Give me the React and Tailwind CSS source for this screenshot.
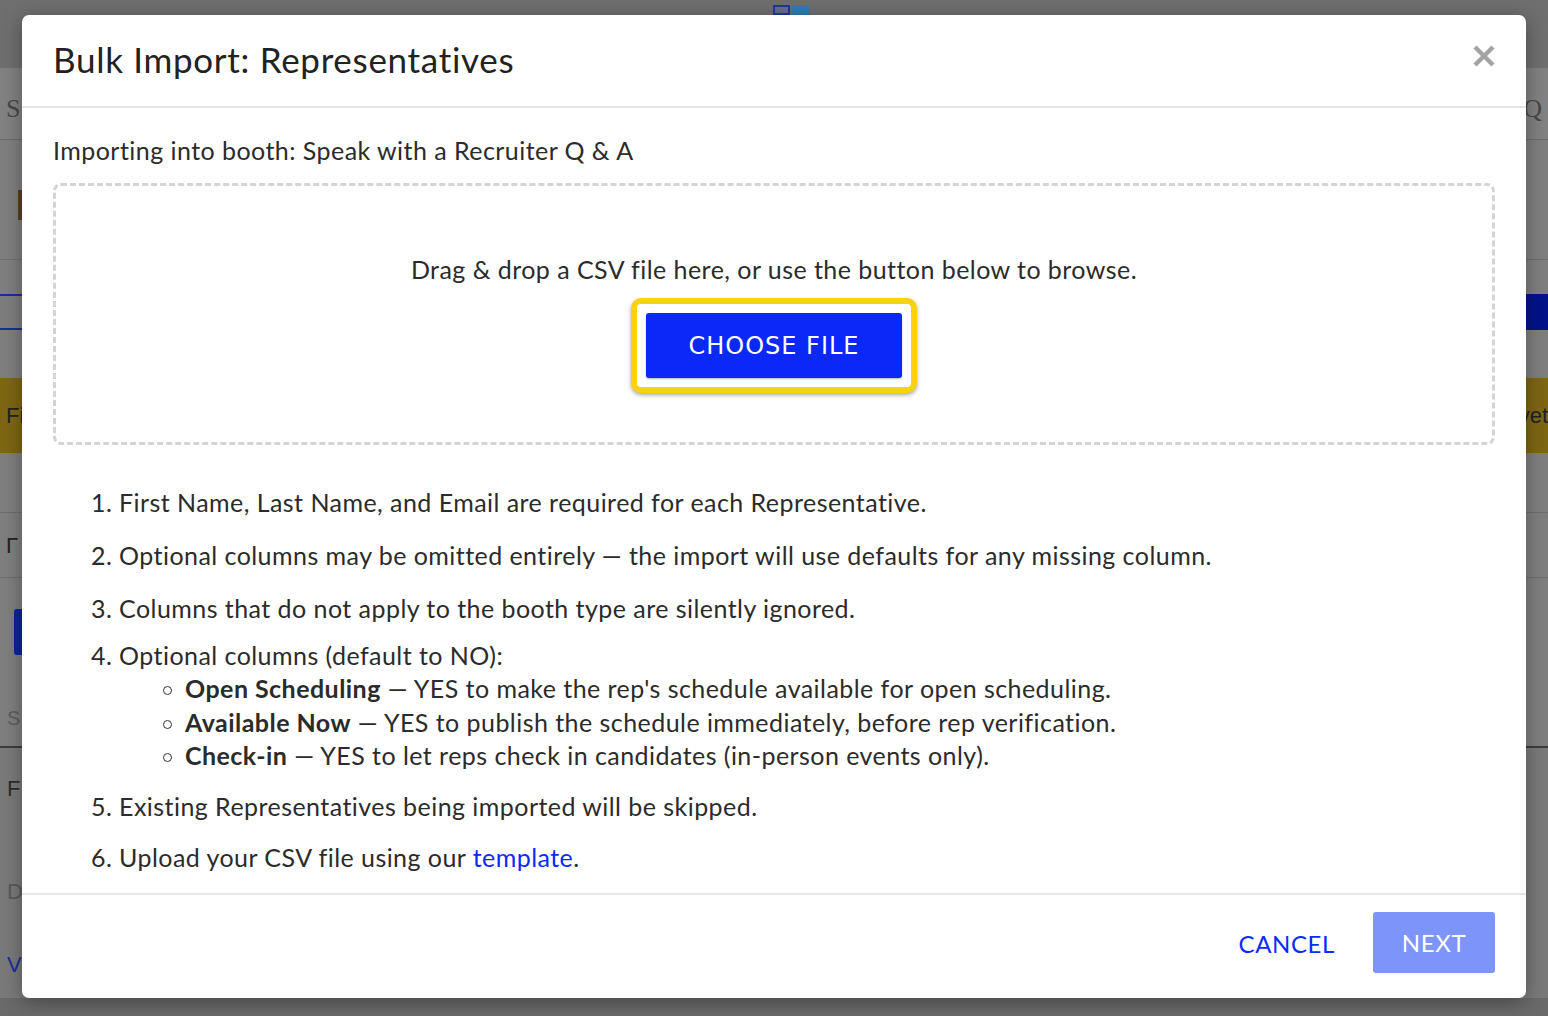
import React from "react";

function CloseIcon() {
  return (
    <svg width="24" height="24" viewBox="0 0 24 24" className="block">
      <path d="M3 3 L21 21 M21 3 L3 21" stroke="#a3a3a3" strokeWidth="4.4" strokeLinecap="butt" />
    </svg>
  );
}

function Background() {
  return (
    <div className="flex flex-col w-full h-[1016px] bg-[#7a7a7a] font-['Liberation_Sans',sans-serif]">
      <div className="h-[68px] bg-[#6f6f6f] flex justify-center">
        <div className="flex gap-[2px] mt-[5px] h-[10px] ml-[34px]">
          <div className="w-[17px] h-[10px] bg-[#6a6f86] border-2 border-[#1d3a9a]" />
          <div className="w-[17px] h-[10px] bg-[#2f7cb5]" />
        </div>
      </div>
      <div className="h-[72px] bg-[#828282] border-b border-[#6c6c6c] flex items-center justify-between px-[6px] text-[#474747] text-[26px] font-['Liberation_Serif',serif]">
        <span className="mt-[10px]">S</span>
        <span className="mt-[10px]">Q</span>
      </div>
      <div className="h-[120px] bg-[#7f7f7f] border-b border-[#6f6f6f] flex items-center px-[18px]">
        <div className="w-[6px] h-[30px] bg-[#5a4020] mt-[10px]" />
      </div>
      <div className="h-[34px] bg-[#7f7f7f]" />
      <div className="h-[36px] flex justify-between">
        <div className="w-[22px] border-y-2 border-[#1c2c9c] bg-[#7e7e7e]" />
        <div className="w-[22px] bg-[#03138a]" />
      </div>
      <div className="h-[48px] bg-[#7f7f7f]" />
      <div className="h-[75px] bg-[#7e6613] flex items-center justify-between text-[22px] text-[#222]">
        <span className="pl-[6px]">Fi</span>
        <span>vet</span>
      </div>
      <div className="h-[60px] bg-[#7f7f7f] border-b border-[#6f6f6f]" />
      <div className="h-[65px] bg-[#7f7f7f] border-b border-[#6f6f6f] flex items-center px-[6px] text-[22px] text-[#222]">
        <span>Γ</span>
      </div>
      <div className="h-[31px] bg-[#7f7f7f]" />
      <div className="h-[46px] bg-[#7f7f7f] flex pl-[14px]">
        <div className="w-[10px] h-full bg-[#0d239e] rounded-l-[3px]" />
      </div>
      <div className="h-[93px] bg-[#7f7f7f] border-b-2 border-[#3d3d3d] flex items-center px-[7px] text-[20px] text-[#5e5e5e]">
        <span className="mt-[34px]">S</span>
      </div>
      <div className="h-[250px] bg-[#7a7a7a] flex flex-col px-[7px] text-[22px] text-[#2d2d2d]">
        <span className="mt-[24px]">F</span>
        <span className="mt-[70px] text-[#5a5a5a]">D</span>
        <span className="mt-[40px] text-[#1a2c9a]">V</span>
      </div>
      <div className="flex-1 bg-[#6a6a6a]" />
    </div>
  );
}

function Bullet() {
  return <span className="inline-block w-[9px] h-[9px] rounded-full border-[1.5px] border-[#333] mr-[13px] mb-[3px]" />;
}

function Item({ n, children, className = "" }) {
  return (
    <li className={"flex " + className}>
      <span className="w-[28px] shrink-0">{n}.</span>
      <div className="flex-1">{children}</div>
    </li>
  );
}

export default function App() {
  return (
    <div className="relative w-full h-[1016px] overflow-hidden">
      <Background />
      <div className="absolute left-[22px] top-[15px] w-[1504px] h-[983px] bg-white rounded-[7px] shadow-[0_4px_20px_rgba(0,0,0,0.35)] flex flex-col font-['Lato',sans-serif] text-[#2b2b2b] tracking-[0.45px]">
        <div className="h-[93px] shrink-0 border-b-2 border-[#e6e6e6] flex items-center justify-between pl-[31px] pr-[30px]">
          <h1 className="text-[35px] leading-none text-[#222] tracking-[0.7px] mt-[-2px]">Bulk Import: Representatives</h1>
          <button className="mt-[-10px]"><CloseIcon /></button>
        </div>
        <div className="flex-1 px-[31px] pt-[25px] text-[25px]">
          <p className="leading-[34px]">Importing into booth: Speak with a Recruiter Q &amp; A</p>
          <div className="mt-[16px] h-[262px] border-[3px] border-dashed border-[#d4d4d4] rounded-[8px] flex flex-col items-center">
            <p className="mt-[66px] leading-[34px]">Drag &amp; drop a CSV file here, or use the button below to browse.</p>
            <div className="mt-[12px] border-[6px] border-[#fcd20c] rounded-[10px] p-[9px] bg-white shadow-[0_2px_4px_rgba(0,0,0,0.35)]">
              <button className="w-[256px] h-[65px] bg-[#0a28f7] rounded-[3px] text-white text-[24px] tracking-[1px] font-['DejaVu_Sans',sans-serif] shadow-[0_1px_2px_rgba(0,0,0,0.3)]">
                CHOOSE FILE
              </button>
            </div>
          </div>
          <ol className="mt-[40px] ml-[38px] leading-[34px]">
            <Item n={1} className="mb-[19px]">First Name, Last Name, and Email are required for each Representative.</Item>
            <Item n={2} className="mb-[19px]">Optional columns may be omitted entirely — the import will use defaults for any missing column.</Item>
            <Item n={3} className="mb-[13px]">Columns that do not apply to the booth type are silently ignored.</Item>
            <Item n={4} className="mb-[16px]">
              <div>Optional columns (default to NO):</div>
              <ul className="ml-[44px]">
                <li className="leading-[33.5px]"><Bullet /><b>Open Scheduling</b> — YES to make the rep's schedule available for open scheduling.</li>
                <li className="leading-[33.5px]"><Bullet /><b>Available Now</b> — YES to publish the schedule immediately, before rep verification.</li>
                <li className="leading-[33.5px]"><Bullet /><b>Check-in</b> — YES to let reps check in candidates (in-person events only).</li>
              </ul>
            </Item>
            <Item n={5} className="mb-[17px]">Existing Representatives being imported will be skipped.</Item>
            <Item n={6}>Upload your CSV file using our <a className="text-[#0a2cf5]">template</a>.</Item>
          </ol>
        </div>
        <div className="h-[105px] shrink-0 border-t-2 border-[#e6e6e6] flex items-center justify-end pr-[31px] gap-[38px]">
          <button className="text-[24px] tracking-[0.6px] text-[#0a2cf5] mt-[-6px]">CANCEL</button>
          <button className="w-[122px] h-[61px] bg-[#7d95fb] rounded-[3px] text-white text-[24px] tracking-[0.6px] mt-[-8px]">NEXT</button>
        </div>
      </div>
    </div>
  );
}
